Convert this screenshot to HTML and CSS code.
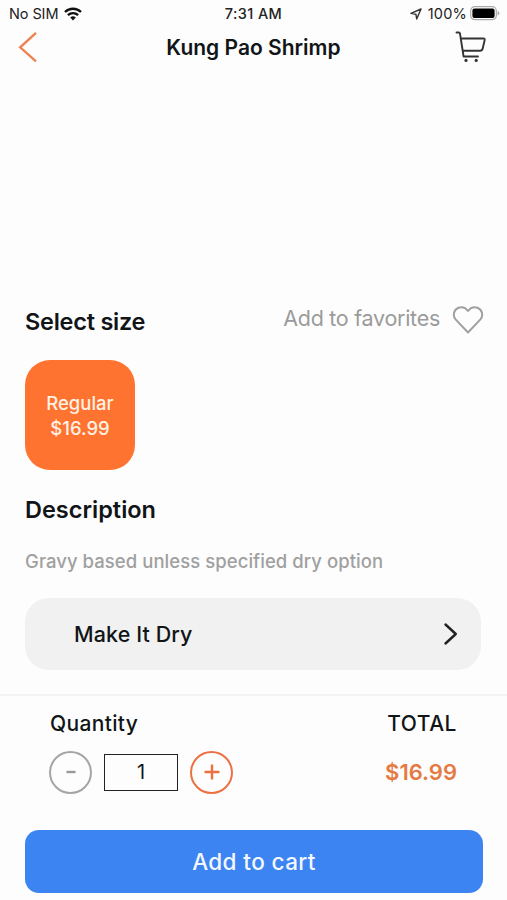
FILE: index.html
```html
<!DOCTYPE html>
<html lang="en">
<head>
<meta charset="utf-8">
<title>Kung Pao Shrimp</title>
<link rel="stylesheet" href="styles.css">
</head>
<body>
<div class="status">
  <div class="carrier"><span class="sim">No SIM</span>
    <svg width="18" height="14" viewBox="0 0 18 14" fill="none" stroke="#111" stroke-width="2.4"><path d="M1 5a11.500 11.500 0 0 1 16 0M3.900 8.200a7.200 7.200 0 0 1 10.200 0"/><path d="M9 13.400 6.200 10.600a4 4 0 0 1 5.600 0Z" fill="#111" stroke="none"/></svg>
  </div>
  <div class="time">7:31 AM</div>
  <div class="power">
    <svg width="12" height="12" viewBox="0 0 12 12" fill="none" stroke="#333" stroke-width="1.4" stroke-linejoin="round"><path d="M11 1 1 5.400 5.900 6.200 6.700 11Z"/></svg>
    <span class="percent">100%</span>
    <svg class="battery" width="30" height="15" viewBox="0 0 30 15"><rect x=".7" y=".7" width="25.600" height="13" rx="4" fill="#fff" stroke="#aaa" stroke-width="1.200"/><rect x="2.400" y="2.500" width="22.200" height="9.400" rx="2" fill="#000"/><path d="M27.600 5v4.600q1.700-.6 1.700-2.300T27.600 5Z" fill="#aaa"/></svg>
  </div>
</div>
<header class="nav">
  <svg width="20" height="32" viewBox="0 0 20 32" fill="none" stroke="#ec8350" stroke-width="2.4"><path d="M18 1.800 2.200 16.300 18 30.300"/></svg>
  <h1 class="title">Kung Pao Shrimp</h1>
  <svg width="32" height="32" viewBox="0 0 32 32" fill="none" stroke="#333" stroke-width="1.9" stroke-linecap="round" stroke-linejoin="round"><path d="M1.500 1.500h2.300q1 0 1.200 1.200L8.600 25.500H23M5.900 7.500h22.600q1.400 0 1.200 1.400l-2 8.600q-.5 2.200-2.600 2.200H7.800"/><circle cx="11" cy="29.400" r="1.600" fill="#333" stroke="none"/><circle cx="21.200" cy="29.400" r="1.600" fill="#333" stroke="none"/></svg>
</header>
<main class="content">
  <div class="size-head">
    <h2 class="select">Select size</h2>
    <div class="favorite"><span class="fav-label">Add to favorites</span>
      <svg width="32" height="30" viewBox="0 0 32 30" fill="none" stroke="#a0a0a0" stroke-width="2" stroke-linejoin="round"><path d="M16 27.500 3.800 14.600C.2 10.800 1.800 4.400 6.500 2.700 10.600 1.300 14 3.200 16 6 18 3.200 21.400 1.300 25.500 2.700c4.700 1.700 6.300 8.100 2.700 11.900Z"/></svg>
    </div>
  </div>
  <button class="size"><span class="regular">Regular</span><span class="size-price">$16.99</span></button>
  <h2 class="description">Description</h2>
  <p class="details">Gravy based unless specified dry option</p>
  <div class="option"><span class="option-label">Make It Dry</span>
    <svg width="16" height="24" viewBox="0 0 16 24" fill="none" stroke="#222" stroke-width="2.400" stroke-linecap="round" stroke-linejoin="round"><path d="M2.500 2.500 12.800 12 2.500 21.500"/></svg>
  </div>
</main>
<footer class="order">
  <div class="labels"><span class="quantity">Quantity</span><span class="total">TOTAL</span></div>
  <div class="values">
    <div class="stepper">
      <button class="round minus"><svg width="12" height="4" viewBox="0 0 12 4"><path d="M1.500 2h9" stroke="#999" stroke-width="2.400"/></svg></button>
      <div class="count">1</div>
      <button class="round plus"><svg width="16" height="16" viewBox="0 0 16 16"><path d="M.5 8h15M8 .5v15" stroke="#ed7042" stroke-width="2.400"/></svg></button>
    </div>
    <span class="total-price">$16.99</span>
  </div>
  <button class="add"><span class="add-label">Add to cart</span></button>
</footer>
</body>
</html>
```
FILE: styles.css
```css
* { box-sizing: border-box; }
body {
  margin: 0;
  width: 507px;
  height: 900px;
  overflow: hidden;
  background: #fdfdfd;
  color: #111518;
  font-family: Inter, "Liberation Sans", sans-serif;
}
h1, h2, p { margin: 0; }
button { border: 0; padding: 0; background: none; font-family: inherit; }
svg { display: block; flex: none; }
span, h1, h2, p, .time { white-space: nowrap; }
.status {
  display: grid;
  grid-template-columns: 1fr auto 1fr;
  align-items: center;
  height: 27px;
  padding: 0 7px;
  font-size: 14.5px;
  color: #222;
}
.carrier, .power { display: flex; align-items: center; }
.carrier { gap: 6px; padding-left: 2px; }
.sim { letter-spacing: -0.1px; }
.time { font-weight: 500; letter-spacing: 0.4px; }
.power { justify-content: flex-end; gap: 6px; }
.percent { letter-spacing: 0.2px; }
.battery { margin-left: -3px; }
.nav {
  display: grid;
  grid-template-columns: 1fr auto 1fr;
  align-items: center;
  height: 40px;
  padding: 0 20px;
}
.nav svg:first-child { margin-left: -2px; }
.nav svg:last-child { justify-self: end; }
.title { font-size: 21px; font-weight: 600; line-height: 28px; padding-top: 1px; }
.content { padding: 237px 25px 0; height: 627px; }
.size-head { display: flex; justify-content: space-between; height: 35px; }
.select, .description { font-size: 23.5px; font-weight: 600; line-height: 36px; }
.select { letter-spacing: -0.25px; }
.favorite { display: flex; gap: 12px; color: #9b9b9b; }
.fav-label { font-size: 21.5px; line-height: 28px; letter-spacing: -0.28px; }
.favorite svg { margin-top: 1px; margin-right: -2px; }
.size {
  display: flex;
  flex-direction: column;
  align-items: center;
  justify-content: center;
  width: 110px;
  height: 110px;
  padding-top: 2px;
  margin-top: 21px;
  border-radius: 25px;
  background: #ff7331;
  color: #fff1e3;
  font-size: 18.5px;
  font-weight: 500;
  line-height: 25px;
}
.description { margin-top: 22px; }
.details { margin-top: 18px; font-size: 18.5px; font-weight: 500; line-height: 30px; letter-spacing: 0.05px; color: #a0a0a0; }
.option {
  display: flex;
  align-items: center;
  justify-content: space-between;
  width: 456px;
  height: 72px;
  margin-top: 22px;
  padding: 0 22px 0 49px;
  border-radius: 24px;
  background: #f1f1f1;
  font-size: 21.5px;
  font-weight: 500;
}
.option-label { letter-spacing: 0.1px; }
.order { height: 206px; padding: 13px 25px 0; border-top: 2px solid #f3f3f3; }
.labels, .values { display: flex; align-items: center; justify-content: space-between; padding: 0 25px; }
.labels { height: 28px; font-size: 21px; font-weight: 500; }
.quantity { letter-spacing: 0.35px; }
.total { letter-spacing: 0.5px; }
.values { height: 42px; margin-top: 14px; }
.stepper { display: flex; align-items: center; gap: 12px; margin-left: -1px; }
.round { display: flex; align-items: center; justify-content: center; width: 43px; height: 43px; border-radius: 50%; }
.minus { border: 2px solid #a5a5a5; }
.plus { border: 2px solid #ed7042; }
.count { width: 74px; height: 37px; border: 1px solid #222; text-align: center; font-size: 20px; line-height: 35px; }
.total-price { font-size: 22px; font-weight: 600; color: #e57a43; }
.add {
  display: flex;
  align-items: center;
  justify-content: center;
  width: 458px;
  height: 63px;
  margin-top: 37px;
  border-radius: 14px;
  background: #3c84f2;
  color: #f4f8ff;
  font-size: 22.5px;
  font-weight: 500;
  letter-spacing: 0.4px;
}
```
